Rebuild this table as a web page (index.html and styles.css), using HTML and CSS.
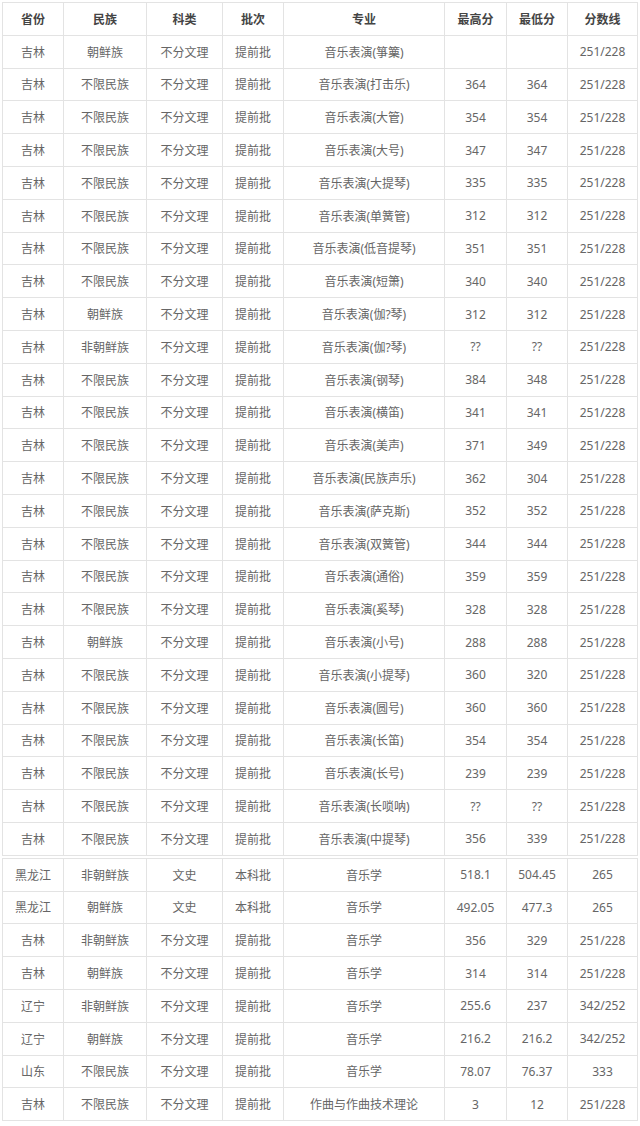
FILE: index.html
```html
<!DOCTYPE html>
<html lang="zh">
<head>
<meta charset="utf-8">
<link rel="stylesheet" href="styles.css">
</head>
<body>
<div class="wrap">
<table class="grid">
<colgroup><col class="c1"><col class="c2"><col class="c3"><col class="c4"><col class="c5"><col class="c6"><col class="c7"><col class="c8"></colgroup>
<thead>
<tr><th>省份</th><th>民族</th><th>科类</th><th>批次</th><th>专业</th><th>最高分</th><th>最低分</th><th>分数线</th></tr>
</thead>
<tbody>
<tr><td>吉林</td><td>朝鲜族</td><td>不分文理</td><td>提前批</td><td>音乐表演(箏篥)</td><td></td><td></td><td>251/228</td></tr>
<tr><td>吉林</td><td>不限民族</td><td>不分文理</td><td>提前批</td><td>音乐表演(打击乐)</td><td>364</td><td>364</td><td>251/228</td></tr>
<tr><td>吉林</td><td>不限民族</td><td>不分文理</td><td>提前批</td><td>音乐表演(大管)</td><td>354</td><td>354</td><td>251/228</td></tr>
<tr><td>吉林</td><td>不限民族</td><td>不分文理</td><td>提前批</td><td>音乐表演(大号)</td><td>347</td><td>347</td><td>251/228</td></tr>
<tr><td>吉林</td><td>不限民族</td><td>不分文理</td><td>提前批</td><td>音乐表演(大提琴)</td><td>335</td><td>335</td><td>251/228</td></tr>
<tr><td>吉林</td><td>不限民族</td><td>不分文理</td><td>提前批</td><td>音乐表演(单簧管)</td><td>312</td><td>312</td><td>251/228</td></tr>
<tr><td>吉林</td><td>不限民族</td><td>不分文理</td><td>提前批</td><td>音乐表演(低音提琴)</td><td>351</td><td>351</td><td>251/228</td></tr>
<tr><td>吉林</td><td>不限民族</td><td>不分文理</td><td>提前批</td><td>音乐表演(短箫)</td><td>340</td><td>340</td><td>251/228</td></tr>
<tr><td>吉林</td><td>朝鲜族</td><td>不分文理</td><td>提前批</td><td>音乐表演(伽?琴)</td><td>312</td><td>312</td><td>251/228</td></tr>
<tr><td>吉林</td><td>非朝鲜族</td><td>不分文理</td><td>提前批</td><td>音乐表演(伽?琴)</td><td>??</td><td>??</td><td>251/228</td></tr>
<tr><td>吉林</td><td>不限民族</td><td>不分文理</td><td>提前批</td><td>音乐表演(钢琴)</td><td>384</td><td>348</td><td>251/228</td></tr>
<tr><td>吉林</td><td>不限民族</td><td>不分文理</td><td>提前批</td><td>音乐表演(横笛)</td><td>341</td><td>341</td><td>251/228</td></tr>
<tr><td>吉林</td><td>不限民族</td><td>不分文理</td><td>提前批</td><td>音乐表演(美声)</td><td>371</td><td>349</td><td>251/228</td></tr>
<tr><td>吉林</td><td>不限民族</td><td>不分文理</td><td>提前批</td><td>音乐表演(民族声乐)</td><td>362</td><td>304</td><td>251/228</td></tr>
<tr><td>吉林</td><td>不限民族</td><td>不分文理</td><td>提前批</td><td>音乐表演(萨克斯)</td><td>352</td><td>352</td><td>251/228</td></tr>
<tr><td>吉林</td><td>不限民族</td><td>不分文理</td><td>提前批</td><td>音乐表演(双簧管)</td><td>344</td><td>344</td><td>251/228</td></tr>
<tr><td>吉林</td><td>不限民族</td><td>不分文理</td><td>提前批</td><td>音乐表演(通俗)</td><td>359</td><td>359</td><td>251/228</td></tr>
<tr><td>吉林</td><td>不限民族</td><td>不分文理</td><td>提前批</td><td>音乐表演(奚琴)</td><td>328</td><td>328</td><td>251/228</td></tr>
<tr><td>吉林</td><td>朝鲜族</td><td>不分文理</td><td>提前批</td><td>音乐表演(小号)</td><td>288</td><td>288</td><td>251/228</td></tr>
<tr><td>吉林</td><td>不限民族</td><td>不分文理</td><td>提前批</td><td>音乐表演(小提琴)</td><td>360</td><td>320</td><td>251/228</td></tr>
<tr><td>吉林</td><td>不限民族</td><td>不分文理</td><td>提前批</td><td>音乐表演(圆号)</td><td>360</td><td>360</td><td>251/228</td></tr>
<tr><td>吉林</td><td>不限民族</td><td>不分文理</td><td>提前批</td><td>音乐表演(长笛)</td><td>354</td><td>354</td><td>251/228</td></tr>
<tr><td>吉林</td><td>不限民族</td><td>不分文理</td><td>提前批</td><td>音乐表演(长号)</td><td>239</td><td>239</td><td>251/228</td></tr>
<tr><td>吉林</td><td>不限民族</td><td>不分文理</td><td>提前批</td><td>音乐表演(长唢呐)</td><td>??</td><td>??</td><td>251/228</td></tr>
<tr><td>吉林</td><td>不限民族</td><td>不分文理</td><td>提前批</td><td>音乐表演(中提琴)</td><td>356</td><td>339</td><td>251/228</td></tr>
</tbody>
</table>
<table class="grid second">
<colgroup><col class="c1"><col class="c2"><col class="c3"><col class="c4"><col class="c5"><col class="c6"><col class="c7"><col class="c8"></colgroup>
<tbody>
<tr><td>黑龙江</td><td>非朝鲜族</td><td>文史</td><td>本科批</td><td>音乐学</td><td>518.1</td><td>504.45</td><td>265</td></tr>
<tr><td>黑龙江</td><td>朝鲜族</td><td>文史</td><td>本科批</td><td>音乐学</td><td>492.05</td><td>477.3</td><td>265</td></tr>
<tr><td>吉林</td><td>非朝鲜族</td><td>不分文理</td><td>提前批</td><td>音乐学</td><td>356</td><td>329</td><td>251/228</td></tr>
<tr><td>吉林</td><td>朝鲜族</td><td>不分文理</td><td>提前批</td><td>音乐学</td><td>314</td><td>314</td><td>251/228</td></tr>
<tr><td>辽宁</td><td>非朝鲜族</td><td>不分文理</td><td>提前批</td><td>音乐学</td><td>255.6</td><td>237</td><td>342/252</td></tr>
<tr><td>辽宁</td><td>朝鲜族</td><td>不分文理</td><td>提前批</td><td>音乐学</td><td>216.2</td><td>216.2</td><td>342/252</td></tr>
<tr><td>山东</td><td>不限民族</td><td>不分文理</td><td>提前批</td><td>音乐学</td><td>78.07</td><td>76.37</td><td>333</td></tr>
<tr><td>吉林</td><td>不限民族</td><td>不分文理</td><td>提前批</td><td>作曲与作曲技术理论</td><td>3</td><td>12</td><td>251/228</td></tr>
</tbody>
</table>
</div>
</body>
</html>
```
FILE: styles.css
```css
html, body {
  margin: 0;
  padding: 0;
  background: #fff;
}
.wrap {
  padding: 2px 4px 0 2px;
}
.grid {
  width: 635px;
  border-collapse: collapse;
  table-layout: fixed;
  font-family: "Noto Sans", "Noto Sans CJK SC", sans-serif;
  font-size: 12px;
  color: #666;
}
.c1 { width: 61px; }
.c2 { width: 83px; }
.c3 { width: 76px; }
.c4 { width: 61px; }
.c5 { width: 161px; }
.c6 { width: 62px; }
.c7 { width: 61px; }
.c8 { width: 70px; }
.grid tr {
  height: 32.8px;
}
.grid th, .grid td {
  border: 1px solid #e3e3e3;
  text-align: center;
  vertical-align: middle;
  padding: 0 2px;
  white-space: nowrap;
}
.grid th {
  color: #444;
  font-weight: bold;
}
.second {
  margin-top: 2px;
}
```
